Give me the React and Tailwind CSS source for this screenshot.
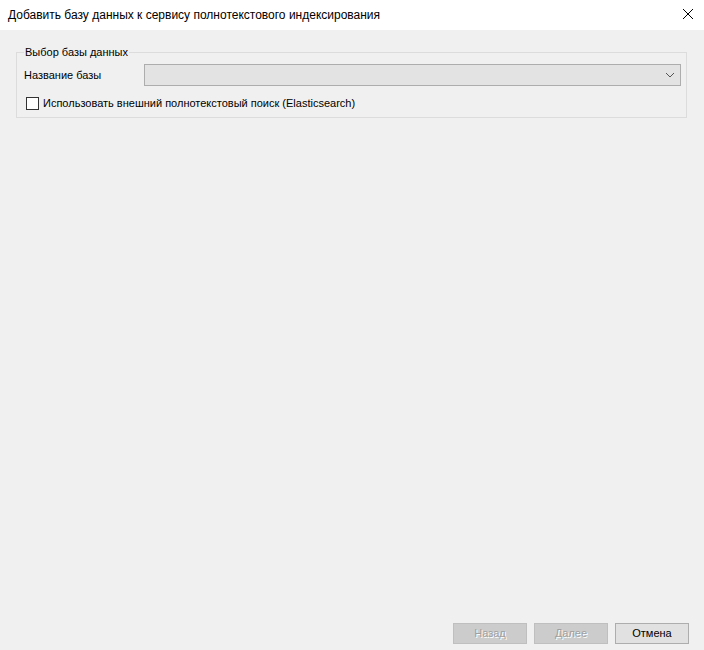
export default function App() {
  const font = { fontFamily: '"Liberation Sans", Arial, sans-serif' };
  return (
    <div className="flex h-[650px] w-[704px] flex-col text-[11px] text-black" style={font}>
      {/* title bar */}
      <div className="flex h-[30px] items-center justify-between bg-white pl-[8px] pr-[10px]">
        <span className="text-[12px] leading-[15px]">Добавить базу данных к сервису полнотекстового индексирования</span>
        <svg width="12" height="12" viewBox="0 0 12 12" className="mt-[-2px]">
          <path d="M1 1 L11 11 M11 1 L1 11" stroke="#000" strokeWidth="1" fill="none" />
        </svg>
      </div>

      {/* body */}
      <div className="flex flex-1 flex-col bg-[#f0f0f0]">
        <fieldset className="ml-[16px] mt-[15px] h-[73px] w-[671px] border border-[#dcdcdc] pl-[7px] pr-[5px]">
          <legend className="ml-0 px-[1px] leading-[15px]">Выбор базы данных</legend>
          <div className="mt-[4px] flex items-center">
            <span className="w-[120px] leading-[15px]">Название базы</span>
            <div className="flex h-[22px] w-[537px] items-center justify-end border border-[#adadad] bg-[#e3e3e3] pr-[5px]">
              <svg width="10" height="6" viewBox="0 0 10 6">
                <path d="M1 1 L5 5 L9 1" stroke="#555" strokeWidth="1" fill="none" />
              </svg>
            </div>
          </div>
          <label className="mt-[10px] flex items-center">
            <span className="ml-[2px] h-[13px] w-[13px] border border-[#333] bg-white" />
            <span className="ml-[4px] leading-[15px]">Использовать внешний полнотекстовый поиск (Elasticsearch)</span>
          </label>
        </fieldset>

        <div className="flex-1" />

        <div className="flex justify-end gap-[7px] pb-[6px] pr-[15px]">
          <button className="h-[21px] w-[74px] border border-[#bfbfbf] bg-[#cccccc] text-[#a0a0a0] [text-shadow:1px_1px_0_#ffffff]">
            Назад
          </button>
          <button className="h-[21px] w-[74px] border border-[#bfbfbf] bg-[#cccccc] text-[#a0a0a0] [text-shadow:1px_1px_0_#ffffff]">
            Далее
          </button>
          <button className="h-[21px] w-[74px] border border-[#adadad] bg-[#e1e1e1] text-black">
            Отмена
          </button>
        </div>
      </div>
    </div>
  );
}
